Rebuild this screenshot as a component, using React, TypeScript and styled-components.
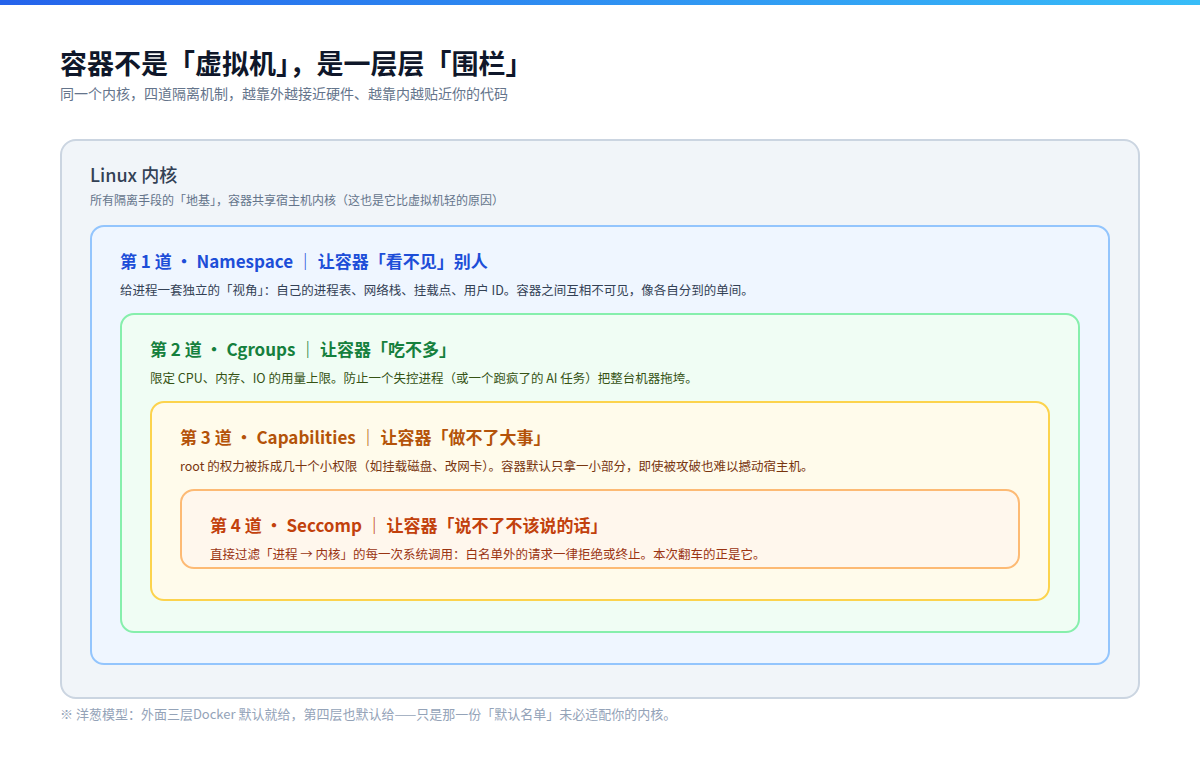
import React from "react";
import styled, { createGlobalStyle } from "styled-components";

const Global = createGlobalStyle`
  html, body { margin: 0; padding: 0; background: #fff; }
  body { font-family: "Noto Sans CJK SC", Inter, sans-serif; width: 1200px; height: 760px; overflow: hidden; }
`;

const TopBar = styled.div`
  height: 5px;
  background: linear-gradient(90deg, #2563eb, #38bdf8);
`;
const Page = styled.div`
  padding: 40px 60px 0 60px;
`;
const Title = styled.h1`
  margin: 0;
  font-size: 27px;
  line-height: 36px;
  font-weight: 700;
  color: #0f172a;
`;
const Sub = styled.div`
  margin-top: 2px;
  font-size: 14px;
  line-height: 20px;
  color: #64748b;
`;
const Kernel = styled.div`
  margin-top: 36px;
  height: 560px;
  box-sizing: border-box;
  border: 2px solid #cbd5e1;
  border-radius: 16px;
  background: #f1f5f9;
  padding: 20px 28px 0 28px;
`;
const KTitle = styled.div`
  font-size: 18px;
  line-height: 26px;
  font-weight: 500;
  color: #334155;
`;
const KSub = styled.div`
  margin-top: 4px;
  font-size: 12px;
  line-height: 18px;
  color: #64748b;
`;
type Tone = { border: string; bg: string; title: string; desc: string };
const Layer = styled.div<{ $t: Tone; $h: number; $mt: number }>`
  margin-top: ${(p) => p.$mt}px;
  height: ${(p) => p.$h}px;
  box-sizing: border-box;
  border: 2px solid ${(p) => p.$t.border};
  background: ${(p) => p.$t.bg};
  border-radius: 14px;
  padding: 21px 28px 0 28px;
`;
const LTitle = styled.div<{ $c: string }>`
  font-size: 17px;
  line-height: 26px;
  font-weight: 700;
  color: ${(p) => p.$c};
  white-space: pre;
`;
const LDesc = styled.div<{ $c: string }>`
  margin-top: 7px;
  font-size: 12.5px;
  line-height: 18px;
  color: ${(p) => p.$c};
`;
const Foot = styled.div`
  margin-top: 6px;
  font-size: 13px;
  line-height: 18px;
  color: #94a3b8;
`;

const t1 = { border: "#93c5fd", bg: "#eff6ff", title: "#1d4ed8", desc: "#334155" };
const t2 = { border: "#86efac", bg: "#f0fdf4", title: "#15803d", desc: "#365314" };
const t3 = { border: "#fcd34d", bg: "#fffbeb", title: "#b45309", desc: "#78350f" };
const t4 = { border: "#fdba74", bg: "#fff7ed", title: "#c2410c", desc: "#9a3412" };

export default function App() {
  return (
    <>
      <Global />
      <TopBar />
      <Page>
        <Title>容器不是「虚拟机」，是一层层「围栏」</Title>
        <Sub>同一个内核，四道隔离机制，越靠外越接近硬件、越靠内越贴近你的代码</Sub>
        <Kernel>
          <KTitle>Linux 内核</KTitle>
          <KSub>所有隔离手段的「地基」，容器共享宿主机内核（这也是它比虚拟机轻的原因）</KSub>
          <Layer $t={t1} $h={440} $mt={16}>
            <LTitle $c={t1.title}>第 1 道 · Namespace ｜ 让容器「看不见」别人</LTitle>
            <LDesc $c={t1.desc}>给进程一套独立的「视角」：自己的进程表、网络栈、挂载点、用户 ID。容器之间互相不可见，像各自分到的单间。</LDesc>
            <Layer $t={t2} $h={320} $mt={14}>
              <LTitle $c={t2.title}>第 2 道 · Cgroups ｜ 让容器「吃不多」</LTitle>
              <LDesc $c={t2.desc}>限定 CPU、内存、IO 的用量上限。防止一个失控进程（或一个跑疯了的 AI 任务）把整台机器拖垮。</LDesc>
              <Layer $t={t3} $h={200} $mt={14}>
                <LTitle $c={t3.title}>第 3 道 · Capabilities ｜ 让容器「做不了大事」</LTitle>
                <LDesc $c={t3.desc}>root 的权力被拆成几十个小权限（如挂载磁盘、改网卡）。容器默认只拿一小部分，即使被攻破也难以撼动宿主机。</LDesc>
                <Layer $t={t4} $h={80} $mt={14}>
                  <LTitle $c={t4.title}>第 4 道 · Seccomp ｜ 让容器「说不了不该说的话」</LTitle>
                  <LDesc $c={t4.desc}>直接过滤「进程 → 内核」的每一次系统调用：白名单外的请求一律拒绝或终止。本次翻车的正是它。</LDesc>
                </Layer>
              </Layer>
            </Layer>
          </Layer>
        </Kernel>
        <Foot>※ 洋葱模型：外面三层Docker 默认就给，第四层也默认给——只是那一份「默认名单」未必适配你的内核。</Foot>
      </Page>
    </>
  );
}
